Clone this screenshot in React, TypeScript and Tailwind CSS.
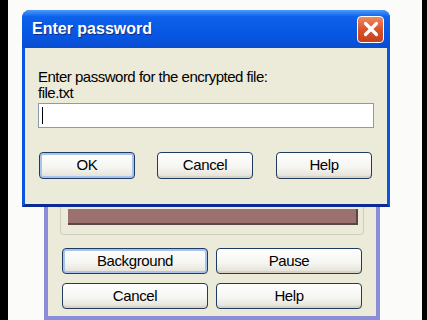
import { X } from "lucide-react";

const font = "font-['Liberation_Sans',Arial,sans-serif]";

function XpButton({ label, primary, className }: { label: string; primary?: boolean; className: string }) {
  return (
    <button
      className={`${className} ${font} flex items-center justify-center rounded-[4px] border border-[#1f3b5f] bg-[linear-gradient(to_bottom,#ffffff,#f4f4f0_60%,#e2dfd4)] text-[15px] tracking-[-0.4px] text-black ${
        primary ? "shadow-[inset_0_0_0_2px_#a9c3ef]" : "shadow-[inset_0_-2px_0_#d8d3c6]"
      }`}
    >
      {label}
    </button>
  );
}

export default function App() {
  return (
    <div className="flex h-[320px] w-[427px] overflow-hidden bg-black">
      <div className="w-[8px] shrink-0 bg-black" />
      <div className="w-[414px] shrink-0 bg-[#fbfbf9] pt-[10px]">
        {/* front dialog */}
        <div className="relative z-10 ml-[14px] flex h-[197px] w-[368px] flex-col overflow-hidden rounded-t-[8px] bg-[#0b55e0]">
          <div className="flex h-[38px] shrink-0 items-center justify-between bg-[linear-gradient(to_bottom,#4a9bff,#0d61ea_18%,#0754df_75%,#0a4cd0)] pl-[10px] pr-[6px]">
            <span className={`${font} text-[16px] font-bold text-white [text-shadow:1px_1px_0_#0a2c8a]`}>
              Enter password
            </span>
            <div className="flex h-[27px] w-[27px] items-center justify-center rounded-[4px] border border-white bg-[linear-gradient(to_bottom,#ee8a62,#d9532c_50%,#c2401c)]">
              <X size={22} strokeWidth={3.5} color="#ffffff" />
            </div>
          </div>
          <div className="flex flex-1 flex-col border-x-[3px] border-b-[3px] border-x-[#0b55e0] border-b-[#0b2a96] bg-[#ecead9] pl-[13px] pt-[21px]">
            <p className={`${font} text-[15px] leading-[16px] tracking-[-0.5px] text-black`}>
              Enter password for the encrypted file:
              <br />
              file.txt
            </p>
            <div className="mt-[2px] flex h-[25px] w-[336px] items-center border border-[#8a9bb0] bg-white pl-[3px]">
              <div className="h-[17px] w-[1px] bg-black" />
            </div>
            <div className="mt-[24px] flex">
              <XpButton label="OK" primary className="h-[27px] w-[96px] ml-[1px]" />
              <XpButton label="Cancel" className="ml-[22px] h-[27px] w-[96px]" />
              <XpButton label="Help" className="ml-[23px] h-[27px] w-[96px]" />
            </div>
          </div>
        </div>

        {/* window behind */}
        <div className="-mt-[30px] ml-[36px] flex h-[143px] w-[336px] flex-col border-x-[4px] border-b-[4px] border-[#8a8ed8] bg-[#ecead9]">
          <div className="mx-[12px] flex h-[58px] shrink-0 items-end rounded-b-[4px] border-x border-b border-[#cfcdbd] pb-[9px] pl-[7px] pr-[5px]">
            <div className="h-[16px] w-full border-b-2 border-r-2 border-b-[#5a4644] border-r-[#5a4644] bg-[#9b716f]" />
          </div>
          <div className="mt-[13px] flex gap-[8px] px-[14px]">
            <XpButton label="Background" primary className="h-[26px] w-[146px]" />
            <XpButton label="Pause" className="h-[26px] w-[146px]" />
          </div>
          <div className="mt-[9px] flex gap-[8px] px-[14px]">
            <XpButton label="Cancel" className="h-[26px] w-[146px]" />
            <XpButton label="Help" className="h-[26px] w-[146px]" />
          </div>
        </div>
      </div>
      <div className="flex-1 bg-black" />
    </div>
  );
}
